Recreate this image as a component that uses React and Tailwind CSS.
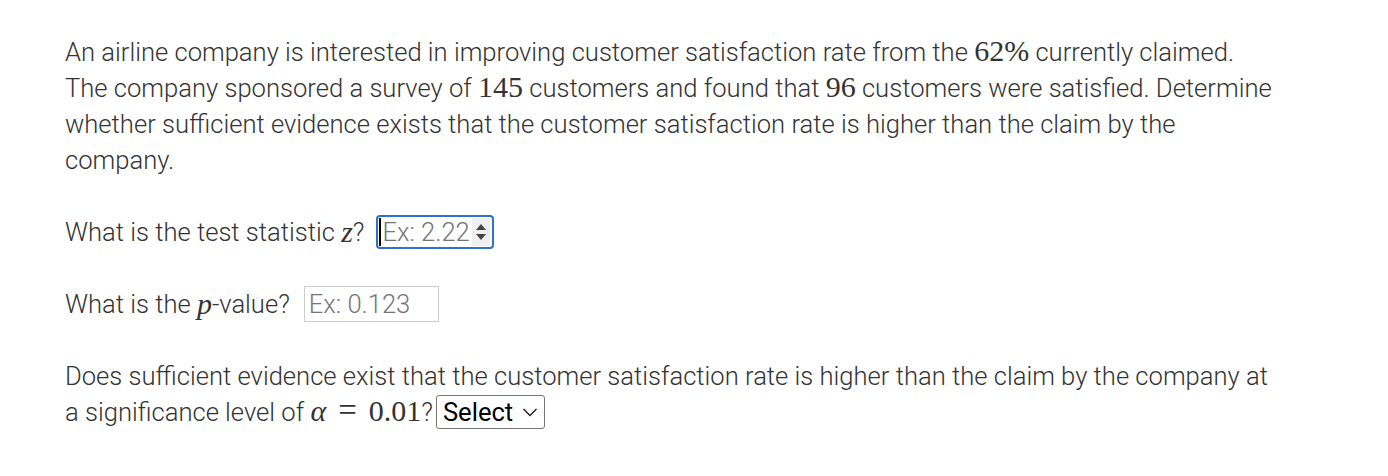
import React from "react";

// Math bits rendered in a serif face, like the KaTeX output in the original
const M = ({ children, italic = false }) => (
  <span
    className={`text-[30px] font-normal leading-none text-[#333] ${italic ? "italic" : ""}`}
    style={{ fontFamily: '"Liberation Serif", "DejaVu Serif", serif' }}
  >
    {children}
  </span>
);

const App = () => {
  return (
    <div
      className="min-h-[476px] w-[1388px] bg-white pl-[65px] pt-[34px] text-[25.6px] font-light leading-[36px] text-[#333]"
      style={{ fontFamily: 'Roboto, "Liberation Sans", sans-serif' }}
    >
      <p className="w-[1216px]">
        An airline company is interested in improving customer satisfaction rate from the{" "}
        <M>62%</M> currently claimed. The company sponsored a survey of <M>145</M> customers and
        found that <M>96</M> customers were satisfied. Determine whether sufficient evidence exists
        that the customer satisfaction rate is higher than the claim by the company.
      </p>

      <p className="mt-[36px] flex items-center">
        What is the test statistic&nbsp;<M italic>z</M>?
        <span className="ml-[12px] flex h-[34px] w-[118px] items-center justify-between rounded-[4px] border-2 border-[#2f6fd6] pl-[1px] pr-[2px]">
          <span className="flex items-center text-[#757575]">
            <span className="mr-[1px] inline-block h-[28px] w-[2px] bg-black" />
            Ex: 2.22
          </span>
          <span className="flex h-[28px] w-[18px] flex-col items-center justify-center bg-[#efefef]">
            <svg width="12" height="20" viewBox="0 0 12 20">
              <path d="M6 2 L11 8 L1 8 Z" fill="#444" />
              <path d="M6 18 L11 12 L1 12 Z" fill="#444" />
            </svg>
          </span>
        </span>
      </p>

      <p className="mt-[36px] flex items-center">
        What is the&nbsp;<M italic>p</M>-value?
        <span className="ml-[14px] flex h-[36px] w-[135px] items-center border border-[#ccc] pl-[4px] text-[#757575]">
          Ex: 0.123
        </span>
      </p>

      <p className="mt-[36px] w-[1212px]">
        Does sufficient evidence exist that the customer satisfaction rate is higher than the claim
        by the company at a significance level of <M italic>α</M>
        <M>
          <span className="mx-[12px] text-[33px]">=</span>0.01
        </M>
        ?
        <span className="ml-[3px] inline-flex h-[34px] w-[109px] -translate-y-[2px] items-center justify-between rounded-[3px] border border-[#767676] pl-[6px] pr-[6px] align-middle font-normal text-black">
          Select
          <svg width="16" height="10" viewBox="0 0 16 10">
            <path d="M1.5 2 L8 8.5 L14.5 2" fill="none" stroke="#222" strokeWidth="1.5" />
          </svg>
        </span>
      </p>
    </div>
  );
};

export default App;
